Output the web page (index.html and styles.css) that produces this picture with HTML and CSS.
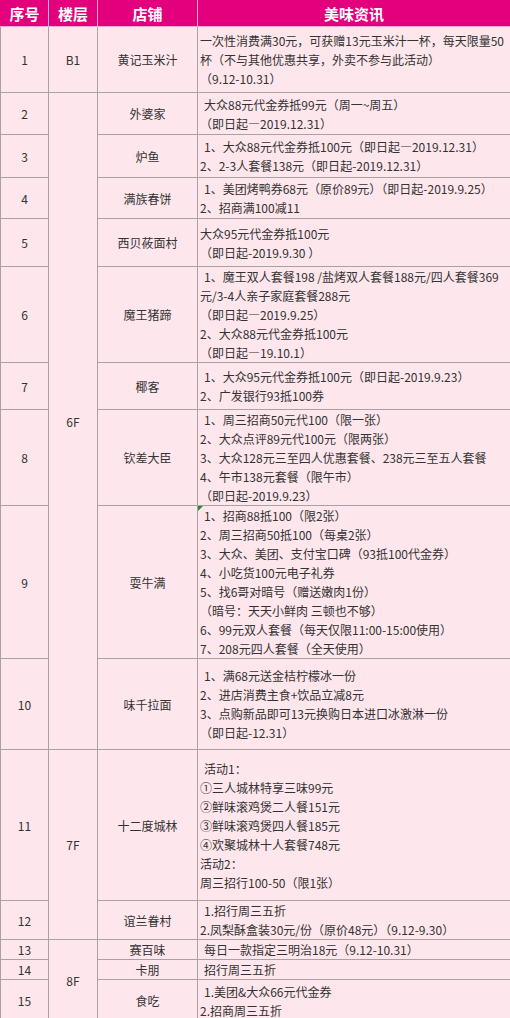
FILE: index.html
```html
<!DOCTYPE html>
<html lang="zh-CN">
<head>
<meta charset="utf-8">
<title>美味资讯</title>
<link rel="stylesheet" href="styles.css">
</head>
<body>
<table class="promo">
  <colgroup>
    <col class="c-no"><col class="c-floor"><col class="c-shop"><col class="c-info">
  </colgroup>
  <thead>
    <tr class="h-head"><th>序号</th><th>楼层</th><th>店铺</th><th>美味资讯</th></tr>
  </thead>
  <tbody>
    <tr class="h66"><td>1</td><td>B1</td><td>黄记玉米汁</td>
      <td class="info"><div>一次性消费满30元，可获赠13元玉米汁一杯，每天限量50</div><div>杯（不与其他优惠共享，外卖不参与此活动）</div><div>（9.12-10.31）</div></td></tr>
    <tr class="h42"><td>2</td><td rowspan="9">6F</td><td>外婆家</td>
      <td class="info"><div class="i">大众88元代金券抵99元（周一~周五）</div><div>（即日起—2019.12.31）</div></td></tr>
    <tr class="h43"><td>3</td><td>炉鱼</td>
      <td class="info"><div class="i">1、大众88元代金券抵100元（即日起—2019.12.31）</div><div>2、2-3人套餐138元（即日起-2019.12.31）</div></td></tr>
    <tr class="h41"><td>4</td><td>满族春饼</td>
      <td class="info"><div class="i">1、美团烤鸭券68元（原价89元）（即日起-2019.9.25）</div><div>2、招商满100减11</div></td></tr>
    <tr class="h48"><td>5</td><td>西贝莜面村</td>
      <td class="info"><div>大众95元代金券抵100元</div><div>（即日起-2019.9.30 ）</div></td></tr>
    <tr class="h96"><td>6</td><td>魔王猪蹄</td>
      <td class="info"><div class="i">1、魔王双人套餐198 /盐烤双人套餐188元/四人套餐369</div><div>元/3-4人亲子家庭套餐288元</div><div>（即日起—2019.9.25）</div><div>2、大众88元代金券抵100元</div><div>（即日起—19.10.1）</div></td></tr>
    <tr class="h47"><td>7</td><td>椰客</td>
      <td class="info"><div class="i">1、大众95元代金券抵100元（即日起-2019.9.23）</div><div>2、广发银行93抵100券</div></td></tr>
    <tr class="h96"><td>8</td><td>钦差大臣</td>
      <td class="info"><div class="i">1、周三招商50元代100（限一张）</div><div>2、大众点评89元代100元（限两张）</div><div>3、大众128元三至四人优惠套餐、238元三至五人套餐</div><div>4、午市138元套餐（限午市）</div><div>（即日起-2019.9.23）</div></td></tr>
    <tr class="h152"><td>9</td><td>耍牛满</td>
      <td class="info note"><div class="i">1、招商88抵100（限2张）</div><div>2、周三招商50抵100（每桌2张）</div><div>3、大众、美团、支付宝口碑（93抵100代金券）</div><div>4、小吃货100元电子礼券</div><div>5、找6哥对暗号（赠送嫩肉1份）</div><div>（暗号：天天小鲜肉 三顿也不够）</div><div>6、99元双人套餐（每天仅限11:00-15:00使用）</div><div>7、208元四人套餐（全天使用）</div></td></tr>
    <tr class="h91"><td>10</td><td>味千拉面</td>
      <td class="info"><div class="i">1、满68元送金桔柠檬冰一份</div><div>2、进店消费主食+饮品立减8元</div><div>3、点购新品即可13元换购日本进口冰激淋一份</div><div>（即日起-12.31）</div></td></tr>
    <tr class="h151"><td>11</td><td rowspan="2">7F</td><td>十二度城林</td>
      <td class="info"><div class="i">活动1：</div><div>①三人城林特享三味99元</div><div>②鲜味滚鸡煲二人餐151元</div><div>③鲜味滚鸡煲四人餐185元</div><div>④欢聚城林十人套餐748元</div><div>活动2：</div><div>周三招行100-50（限1张）</div></td></tr>
    <tr class="h38"><td>12</td><td>谊兰眷村</td>
      <td class="info"><div class="i">1.招行周三五折</div><div>2.凤梨酥盒装30元/份（原价48元）（9.12-9.30）</div></td></tr>
    <tr class="h19"><td>13</td><td rowspan="3">8F</td><td>赛百味</td>
      <td class="info"><div class="i">每日一款指定三明治18元（9.12-10.31）</div></td></tr>
    <tr class="h19"><td>14</td><td>卡朋</td>
      <td class="info"><div class="i">招行周三五折</div></td></tr>
    <tr class="h42"><td>15</td><td>食吃</td>
      <td class="info"><div class="i">1.美团&amp;大众66元代金券</div><div>2.招商周三五折</div></td></tr>
  </tbody>
</table>
</body>
</html>
```
FILE: styles.css
```css
html, body {
  margin: 0;
  padding: 0;
  background: #ffffff;
}

.promo {
  border-collapse: collapse;
  table-layout: fixed;
  width: 510px;
  font-family: "Noto Sans CJK SC", "Noto Sans", sans-serif;
  font-size: 12px;
  line-height: 19px;
  color: #333333;
}

.c-no { width: 48px; }
.c-floor { width: 49px; }
.c-shop { width: 100px; }
.c-info { width: 313px; }

.promo th {
  background: #e3007d;
  color: #ffffff;
  font-size: 15px;
  font-weight: bold;
  line-height: 20px;
  padding: 0;
  border: 1px solid #f4a9cf;
  border-top-color: #e3007d;
  text-align: center;
}

.promo th:first-child { border-left-color: #e3007d; }
.promo th:last-child { border-right-color: #e3007d; }

.promo td {
  background: #fde6ec;
  border: 1px solid #a9a2a5;
  padding: 0;
  text-align: center;
  vertical-align: middle;
  white-space: nowrap;
  overflow: hidden;
}

.promo td.info {
  text-align: left;
  padding-left: 2px;
  position: relative;
}

.info div { white-space: nowrap; }
.info .i { padding-left: 4px; }

.note::before {
  content: "";
  position: absolute;
  left: 0;
  top: 0;
  border-top: 5px solid #1e8c2a;
  border-right: 5px solid transparent;
}

.h-head { height: 26px; }
.h19 { height: 19px; }
.h38 { height: 38px; }
.h41 { height: 41px; }
.h42 { height: 42px; }
.h43 { height: 43px; }
.h47 { height: 47px; }
.h48 { height: 48px; }
.h66 { height: 66px; }
.h91 { height: 91px; }
.h96 { height: 96px; }
.h151 { height: 151px; }
.h152 { height: 152px; }
```
